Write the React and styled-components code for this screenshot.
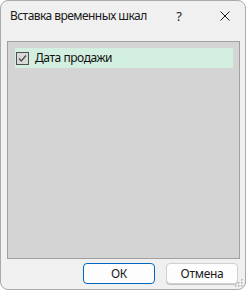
import React from "react";
import styled, { createGlobalStyle } from "styled-components";

const Global = createGlobalStyle`
  html, body { margin: 0; padding: 0; background: #ffffff; }
  body { font-family: "Noto Sans", "Liberation Sans", sans-serif; }
`;

const Window = styled.div`
  position: relative;
  box-sizing: border-box;
  width: 246px;
  height: 290px;
  background: #f0f0f0;
  border: 1px solid #a9a9a9;
  border-radius: 8px;
  display: flex;
  flex-direction: column;
  overflow: hidden;
`;

const TitleBar = styled.div`
  height: 40px;
  display: flex;
  align-items: flex-start;
  padding-top: 6px;
  box-sizing: border-box;
  color: #1a1a1a;
  font-size: 12px;
`;

const Title = styled.div`
  margin-left: 9px;
  line-height: 18px;
  flex: 1;
  letter-spacing: -0.55px;
`;

const Help = styled.div`
  width: 14px;
  line-height: 18px;
  text-align: center;
  margin-right: 34px;
  font-size: 13px;
`;

const Close = styled.div`
  width: 10px;
  height: 18px;
  display: flex;
  align-items: center;
  margin-right: 15px;
`;

const Panel = styled.div`
  box-sizing: border-box;
  margin-left: 6px;
  width: 233px;
  height: 218px;
  background: #d4d4d4;
  border: 1px solid #a0a0a0;
  padding: 6px 6px 0 7px;
`;

const Row = styled.div`
  height: 20px;
  background: ${(p) => (p.$selected ? "#d3efdf" : "transparent")};
  display: flex;
  align-items: center;
  padding-left: 1px;
  font-size: 12px;
  color: #111;
`;

const Check = styled.div`
  box-sizing: border-box;
  width: 13px;
  height: 13px;
  border: 1px solid #4f4f4f;
  background: #d9d9d9;
  display: flex;
  align-items: center;
  justify-content: center;
  margin-right: 6px;
`;

const Label = styled.span`
  line-height: 20px;
  letter-spacing: -0.45px;
`;

const Buttons = styled.div`
  display: flex;
  justify-content: flex-end;
  gap: 11px;
  padding: 4px 7px 0 0;
`;

const Button = styled.button`
  box-sizing: border-box;
  width: 72px;
  height: 21px;
  border-radius: 4px;
  background: #fdfdfd;
  border: 1px solid ${(p) => (p.$primary ? "#0067c0" : "#d0d0d0")};
  box-shadow: ${(p) => (p.$primary ? "none" : "0 1px 0 #c4c4c4")};
  font-family: "Noto Sans", "Liberation Sans", sans-serif;
  font-size: 12px;
  letter-spacing: -0.3px;
  color: #1a1a1a;
  padding: 0;
  line-height: 18px;
`;

const Grip = styled.svg`
  position: absolute;
  right: 2px;
  bottom: 2px;
`;

export default function App() {
  return (
    <>
      <Global />
      <Window>
        <TitleBar>
          <Title>Вставка временных шкал</Title>
          <Help>?</Help>
          <Close>
            <svg width="10" height="10" viewBox="0 0 10 10">
              <path d="M0.5 0.5 L9.5 9.5 M9.5 0.5 L0.5 9.5" stroke="#1a1a1a" strokeWidth="1" fill="none" />
            </svg>
          </Close>
        </TitleBar>
        <Panel>
          <Row $selected>
            <Check>
              <svg width="11" height="11" viewBox="0 0 11 11">
                <path d="M2 5.5 L4.3 8 L9 2.5" stroke="#505050" strokeWidth="1.4" fill="none" />
              </svg>
            </Check>
            <Label>Дата продажи</Label>
          </Row>
        </Panel>
        <Buttons>
          <Button $primary>ОК</Button>
          <Button>Отмена</Button>
        </Buttons>
        <Grip width="8" height="8" viewBox="0 0 8 8">
          <rect x="6" y="0" width="1.5" height="1.5" fill="#b0b0b0" />
          <rect x="3" y="3" width="1.5" height="1.5" fill="#b0b0b0" />
          <rect x="6" y="3" width="1.5" height="1.5" fill="#b0b0b0" />
          <rect x="0" y="6" width="1.5" height="1.5" fill="#b0b0b0" />
          <rect x="3" y="6" width="1.5" height="1.5" fill="#b0b0b0" />
          <rect x="6" y="6" width="1.5" height="1.5" fill="#b0b0b0" />
        </Grip>
      </Window>
    </>
  );
}
